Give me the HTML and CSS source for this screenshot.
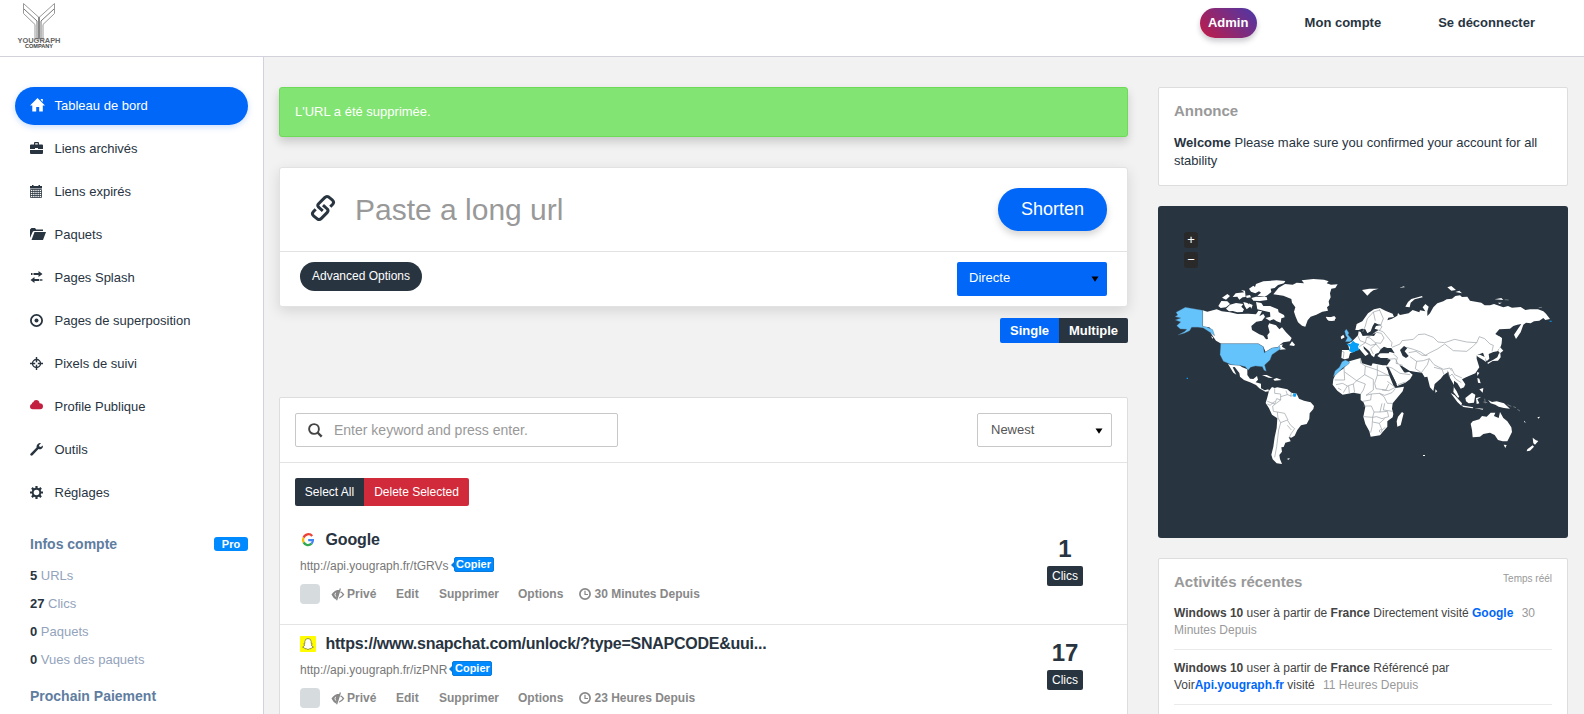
FILE: index.html
```html
<!DOCTYPE html>
<html lang="fr">
<head>
<meta charset="utf-8">
<title>Tableau de bord</title>
<link rel="stylesheet" href="styles.css">
</head>
<body>
<svg class="defs" width="0" height="0">
  <symbol id="eye" viewBox="0 0 14 13"><path d="M0.5 6.5 Q3.500 2 8.500 1.800 L5 11.500 Q2 10 .5 6.500z M8.800 .3 L10 .8 L6.200 12.600 L5 12.100z" fill="#888"/><path d="M4.600 4.800 Q3.200 6.800 4.800 8.600" fill="none" stroke="#fff" stroke-width=".9"/><path d="M9.800 3.200 Q12 4.400 13.400 6.500 Q11.500 9.600 7.800 10.700 L8.400 9.200 Q10.600 8.300 11.600 6.600 Q10.800 5.300 9.200 4.600z" fill="#888"/></symbol>
  <symbol id="clock" viewBox="0 0 12 12"><circle cx="6" cy="6" r="5.100" fill="none" stroke="#888" stroke-width="1.700"/><path d="M6 2.800v3.700h3" fill="none" stroke="#888" stroke-width="1.200"/></symbol>
</svg>
<header class="topbar">
  <svg class="logo" width="44" height="46" viewBox="0 0 44 46">
    <g fill="none" stroke="#999" stroke-width="1">
      <path d="M6.500 .5 L22 14.500 L37.500 .5 V10.500 L26 21.500 V36 H18 V21.500 L6.500 10.500z"/>
      <path d="M7 6 L20 18 V36 M37 6 L24 18 V36" stroke="#777"/>
      <path d="M22 14v22" stroke="#888" stroke-width="2"/>
    </g>
    <text x="22" y="40.300" text-anchor="middle" textLength="43" lengthAdjust="spacingAndGlyphs" class="logo-a">YOUGRAPH</text>
    <text x="22" y="44.800" text-anchor="middle" textLength="28" lengthAdjust="spacingAndGlyphs" class="logo-b">COMPANY</text>
  </svg>
  <nav class="topnav">
    <a class="admin">Admin</a>
    <a class="account">Mon compte</a>
    <a>Se déconnecter</a>
  </nav>
</header>
<div class="shell">
  <aside class="sidebar">
    <ul class="menu">
      <li class="active"><svg width="15" height="14" viewBox="0 0 15 14"><path d="M7.500 0 L15 7.500 H12.800 V13.500 H9.200 V9 H6.200 V13.500 H2.300 V7.500 H0z M10.800 1h2v3l-2-2z" fill="#fff"/></svg><span>Tableau de bord</span></li>
      <li><svg width="13" height="12" viewBox="0 0 13 12"><path d="M4 2.500V1.200Q4 0 5 0h3q1 0 1 1.200V2.500h3q1 0 1 1V7H8V6H5v1H0V3.500q0-1 1-1z M5.200 2.500h2.600V1.200H5.200z M0 8h13v3q0 1-1 1H1q-1 0-1-1z" fill="#28343f" fill-rule="evenodd"/></svg><span>Liens archivés</span></li>
      <li><svg width="13" height="13" viewBox="0 0 13 13"><path d="M0 1h2V0h1.500v1h5V0H10v1h2v2.500H0z" fill="#28343f"/><path d="M.5 4.500h11v8H.5z M.5 6.500h11 M.5 8.500h11 M.5 10.500h11 M2.700 4.500v8 M4.900 4.500v8 M7.100 4.500v8 M9.300 4.500v8" fill="none" stroke="#28343f" stroke-width=".8"/></svg><span>Liens expirés</span></li>
      <li><svg width="16" height="12" viewBox="0 0 16 12"><path d="M0 10V1.500L1.500 0H5l1.200 1.500H13V3H4.200Q3 3 2.600 4z M4.500 4H16L13 12H1.500z" fill="#28343f"/></svg><span>Paquets</span></li>
      <li><svg width="13" height="12" viewBox="0 0 13 12"><path d="M4 2h4.500V0L12.500 3 8.500 6V4H4z M1 2h1v2H1z M2.500 2h1v2h-1z M9 8H4.500V6L.5 9l4 3v-2H9z M9.700 8h1v2h-1z M11.300 8h1v2h-1z" fill="#28343f"/></svg><span>Pages Splash</span></li>
      <li><svg width="13" height="13" viewBox="0 0 13 13"><circle cx="6.500" cy="6.500" r="5.600" fill="none" stroke="#28343f" stroke-width="1.800"/><circle cx="6.500" cy="6.500" r="2" fill="#28343f"/></svg><span>Pages de superposition</span></li>
      <li><svg width="13" height="13" viewBox="0 0 13 13"><circle cx="6.500" cy="6.500" r="4" fill="none" stroke="#28343f" stroke-width="1.400"/><path d="M5.800 0h1.400v5.200H5.800z M5.800 7.800h1.400V13H5.800z M0 5.800h5.200v1.400H0z M7.800 5.800H13v1.400H7.800z" fill="#28343f"/></svg><span>Pixels de suivi</span></li>
      <li><svg class="up" width="13" height="10" viewBox="0 0 13 10"><path d="M2.800 9.300Q0 9.300 0 6.500 0 4.500 1.800 4.100 1.600 2.400 3.200 2.200 4.200 0 6.200 .1 9 .2 9.600 3.200 13 3.200 13 6.300 13 9.300 10.200 9.300z" fill="#c3203f"/></svg><span>Profile Publique</span></li>
      <li><svg width="13" height="13" viewBox="0 0 13 13"><path d="M12.800 2.500 Q13.300 4.600 11.600 5.800 10 6.700 8.500 6 L2.600 12.300 Q1.600 13.200 .6 12.300 -.2 11.400 .7 10.400 L6.600 4.600 Q6.200 2.500 7.800 1 9.400 -.3 11 .3 L9 2.200 9.300 3.600 10.800 4.100z" fill="#28343f"/></svg><span>Outils</span></li>
      <li><svg width="13" height="13" viewBox="0 0 13 13"><circle cx="6.500" cy="6.500" r="3.800" fill="none" stroke="#28343f" stroke-width="2"/><path d="M6.500 0v2.500M6.500 10.500V13M0 6.500h2.500M10.500 6.500H13M1.900 1.900l1.700 1.700M9.400 9.400l1.700 1.700M1.900 11.100l1.700-1.700M9.400 3.600l1.700-1.700" stroke="#28343f" stroke-width="2.200"/></svg><span>Réglages</span></li>
    </ul>
    <div class="info-head"><h3>Infos compte</h3><span class="pro">Pro</span></div>
    <ul class="stats">
      <li><b>5</b> URLs</li>
      <li><b>27</b> Clics</li>
      <li><b>0</b> Paquets</li>
      <li><b>0</b> Vues des paquets</li>
    </ul>
    <h3 class="next">Prochain Paiement</h3>
  </aside>
  <main class="content">
    <section class="center">
      <div class="alert">L'URL a été supprimée.</div>
      <div class="shortener">
        <div class="url-row">
          <svg class="chain" width="26" height="28" viewBox="0 0 26 28"><g fill="none" stroke="#28343f" stroke-width="3" stroke-linejoin="round"><path d="M12.800 16.800 L8.600 13.200 Q7 11.500 8.600 9.800 L14.700 3.600 Q16.500 1.800 18.500 2.900 L22.500 6.200 Q24.500 8.200 22.700 10.200 L20.300 12.700"/><path d="M13 11.200 L17.300 15 Q18.700 16.600 17.300 18.400 L11.400 24.400 Q9.600 26.200 7.600 25.100 L3.500 21.800 Q1.500 19.800 3.300 17.800 L5.700 15.300"/></g></svg>
          <span class="paste">Paste a long url</span>
          <span class="shorten">Shorten</span>
        </div>
        <div class="opt-row">
          <span class="advanced">Advanced Options</span>
          <span class="direct">Directe<svg width="8" height="6" viewBox="0 0 8 6"><path d="M.5 .5h7L4 5.800z"/></svg></span>
        </div>
      </div>
      <div class="mode"><span class="single">Single</span><span class="multiple">Multiple</span></div>
      <div class="links">
        <div class="filter">
          <div class="search"><svg width="15" height="15" viewBox="0 0 15 15"><circle cx="6" cy="6" r="4.900" fill="none" stroke="#444" stroke-width="1.900"/><path d="M9.500 9.500l4.200 4.200" stroke="#444" stroke-width="2.400"/></svg><span>Enter keyword and press enter.</span></div>
          <div class="sort">Newest<svg width="8" height="6" viewBox="0 0 8 6"><path d="M.5 .5h7L4 5.800z"/></svg></div>
        </div>
        <div class="bulk"><span class="all">Select All</span><span class="delete">Delete Selected</span></div>
        <article class="item">
          <div class="details">
            <h4><svg width="16" height="16" viewBox="0 0 16 16"><g fill="none" stroke-width="2.300"><path d="M12.200 4A5 5 0 0 0 3.600 5.700" stroke="#ea4335"/><path d="M3.600 5.700A5 5 0 0 0 3.600 10.400" stroke="#fbbc05"/><path d="M3.600 10.400A5 5 0 0 0 11.500 11.700" stroke="#34a853"/><path d="M11.500 11.700A5 5 0 0 0 12.900 8.100H8.200" stroke="#4285f4"/></g></svg><span class="name">Google</span></h4>
            <p class="short">http://api.yougraph.fr/tGRVs<span class="copy">Copier</span></p>
            <div class="actions"><i></i><svg class="eye" width="14" height="13"><use href="#eye"/></svg><b class="a1">Privé</b><b class="a2">Edit</b><b class="a3">Supprimer</b><b class="a4">Options</b><svg class="clock" width="12" height="12"><use href="#clock"/></svg><b>30 Minutes Depuis</b></div>
          </div>
          <div class="clicks"><strong>1</strong><span>Clics</span></div>
        </article>
        <article class="item second">
          <div class="details">
            <h4><svg width="16" height="16" viewBox="0 0 16 16"><rect width="16" height="16" rx="1" fill="#fffc00"/><path d="M8 2.500Q11 2.500 11.200 5.500V7.500L12.300 7.800 11.300 9Q12 10.600 13.500 11.100L11.500 12 11 12.700Q9.500 12.400 8 13.600 6.500 12.400 5 12.700L4.500 12 2.500 11.100Q4 10.600 4.700 9L3.700 7.800 4.800 7.500V5.500Q5 2.500 8 2.500z" fill="#fff" stroke="#7c7c30" stroke-width=".8"/></svg><span class="name tight">https://www.snapchat.com/unlock/?type=SNAPCODE&amp;uui...</span></h4>
            <p class="short">http://api.yougraph.fr/izPNR<span class="copy">Copier</span></p>
            <div class="actions"><i></i><svg class="eye" width="14" height="13"><use href="#eye"/></svg><b class="a1">Privé</b><b class="a2">Edit</b><b class="a3">Supprimer</b><b class="a4">Options</b><svg class="clock" width="12" height="12"><use href="#clock"/></svg><b>23 Heures Depuis</b></div>
          </div>
          <div class="clicks"><strong>17</strong><span>Clics</span></div>
        </article>
      </div>
    </section>
    <section class="right">
      <div class="panel notice"><h3>Annonce</h3><p><b>Welcome</b> Please make sure you confirmed your account for all stability</p></div>
      <div class="map">
        <div class="zoom"><span>+</span><span>−</span></div>
        <svg width="410" height="332" viewBox="24 18 1230 996">
          <g fill="#fff">
            <!-- Greenland, Iceland -->
            <path d="M370 283 L386 263 L405 252 L428 254 L440 248 L462 250 L455 241 L490 237 L522 239 L536 244 L530 250 L543 254 L563 253 L556 264 L544 266 L540 280 L542 292 L536 304 L538 316 L531 322 L534 332 L517 335 L499 344 L482 350 L473 361 L466 380 L456 377 L444 367 L437 350 L432 335 L436 322 L426 308 L424 297 L400 287z"/>
            <path d="M528 350 L541 352 L553 348 L558 355 L546 363 L533 360z"/>
            <!-- Arctic islands -->
            <path d="M297 266 L310 257 L315 261 L318 252 L340 244 L380 241 L406 243 L402 250 L384 255 L374 264 L362 266 L364 276 L352 286 L344 290 L322 287 L333 278 L327 274 L316 280 L303 275z"/>
            <path d="M216 293 L232 282 L240 288 L228 299z M248 291 L257 280 L283 277 L273 270 L285 272 L287 291 L278 292 L268 299 L262 290z M288 287 L300 285 L303 292 L290 294z M304 294 L318 290 L350 291 L352 300 L330 303 L310 302z M205 318 L214 303 L232 304 L240 312 L228 322 L212 324z M228 326 L240 314 L258 309 L280 312 L274 320 L282 328 L278 336 L262 337 L248 333 L237 334z M280 306 L292 309 L303 318 L290 328 L284 318z M296 310 L308 315 L304 326z M318 306 L334 309 L340 318 L360 318 L384 328 L386 337 L402 345 L404 352 L394 355 L392 368 L380 364 L371 358 L359 362 L346 354 L361 350 L360 337 L340 332 L322 328z"/>
            <!-- Canada -->
            <path d="M158 331 L172 335 L200 328 L215 334 L240 337 L262 342 L294 341 L318 343 L325 332 L336 334 L328 349 L340 342 L345 350 L336 362 L319 365 L304 378 L306 390 L328 403 L340 407 L348 418 L354 417 L352 406 L359 397 L354 378 L358 370 L378 376 L388 388 L396 382 L408 397 L425 414 L420 424 L400 427 L388 436 L398 433 L396 440 L408 448 L390 449 L383 442 L366 444 L347 456 L340 440 L325 431 L214 431 L198 422 L182 399 L190 397 L178 382 L158 380z"/>
            <path d="M418 436 L426 424 L435 434 L432 438z M183 407 L190 413 L187 416z"/>
            <!-- Mexico, Central America, Caribbean -->
            <path d="M234 492 L244 495 L268 496 L277 502 L292 508 L292 525 L300 536 L310 537 L321 528 L324 539 L317 547 L333 551 L333 565 L344 571 L355 568 L357 574 L346 575 L328 565 L318 555 L300 547 L282 540 L270 530 L268 519 L254 501 L248 502 L259 524 L250 518z M336 525 L350 525 L369 534 L356 533z M370 538 L380 534 L395 540 L374 542z"/>
            <!-- South America -->
            <path d="M357 572 L366 561 L374 564 L382 562 L412 568 L424 578 L440 581 L447 596 L462 602 L482 607 L492 618 L490 627 L479 640 L478 657 L470 672 L453 676 L442 690 L434 707 L424 713 L416 711 L422 724 L406 728 L401 741 L394 742 L396 755 L388 765 L390 777 L396 792 L380 790 L368 778 L364 764 L370 740 L374 712 L380 684 L382 655 L366 644 L357 625 L347 609 L352 592z M410 777 L419 774 L417 779z"/>
          </g>
          <g transform="translate(480 150)" fill="#fff">
            <!-- Eurasia -->
            <path d="M136 240 L140 222 L157 214 L174 190 L192 178 L210 174 L226 182 L248 191 L252 201 L235 203 L232 211 L246 206 L262 197 L264 189 L270 195 L296 190 L308 180 L328 187 L330 181 L346 184 L338 172 L346 162 L356 170 L352 184 L352 198 L360 190 L370 172 L382 160 L400 154 L410 148 L426 146 L436 138 L450 136 L456 141 L472 140 L480 152 L514 158 L524 166 L540 166 L552 162 L580 172 L594 168 L606 173 L632 171 L646 180 L660 178 L684 178 L700 184 L708 191 L720 207 L706 210 L700 204 L688 212 L672 214 L662 220 L648 218 L640 224 L632 247 L618 267 L612 254 L624 236 L634 222 L622 224 L610 228 L600 236 L568 238 L556 252 L576 264 L573 288 L562 304 L550 306 L536 312 L538 326 L530 334 L524 322 L519 308 L500 316 L500 326 L508 352 L496 370 L468 382 L456 388 L466 403 L462 412 L452 416 L442 400 L432 392 L432 412 L440 424 L448 441 L444 443 L430 426 L432 405 L420 384 L415 365 L400 376 L392 386 L374 402 L370 423 L360 412 L352 380 L344 382 L336 368 L314 365 L298 362 L276 348 L268 345 L282 366 L298 366 L308 374 L300 388 L286 398 L262 408 L254 391 L236 358 L230 347 L242 330 L232 324 L212 324 L202 318 L210 310 L240 306 L254 310 L244 294 L232 294 L222 290 L212 298 L206 308 L196 312 L192 322 L184 316 L178 304 L160 288 L162 296 L176 312 L166 318 L154 304 L148 296 L134 304 L120 310 L116 325 L104 328 L94 324 L96 300 L118 300 L116 290 L112 282 L124 276 L134 266 L144 256 L146 244 L152 246 L158 258 L184 256 L196 246 L206 240 L194 236 L198 228 L216 225 L204 223 L194 218 L188 228 L182 244 L172 250 L166 238 L156 236 L146 240z"/>
            <path d="M156 120 L178 116 L206 116 L190 121 L182 127 L172 137z M268 113 L282 109 L284 112z M286 170 L294 156 L304 147 L336 138 L338 142 L314 148 L302 158 L299 172z M412 112 L424 108 L438 120 L424 122z M436 126 L448 122 L456 130z M554 148 L574 144 L580 150z M584 150 L596 150z M564 158 L576 158 L568 162z M686 173 L696 172z M92 260 L100 254 L104 262 L94 268z M47 202 L76 202 L74 212 L56 212z"/>
            <!-- Japan, Southeast Asia -->
            <path d="M568 258 L575 266 L574 284 L569 280z M564 302 L570 291 L580 302 L570 310z M567 310 L571 310 L572 322 L564 332 L548 333 L534 342 L532 338 L550 329 L562 322z M498 316 L510 314 L526 322 L528 336 L520 330 L506 322z M501 366 L508 368 L502 378z M502 384 L508 386 L512 400 L504 398z M508 418 L520 414 L518 428z M376 418 L382 424 L376 428z M422 429 L434 436 L456 460 L454 467 L442 456z M454 466 L490 472 L488 475 L460 471z M494 474 L520 476 L518 479z M466 444 L486 428 L496 434 L492 458 L476 460 L468 454z M498 444 L514 440 L502 448 L508 460 L500 462z M534 450 L546 456 L560 454 L582 460 L600 476 L582 474 L566 470 L556 464 L542 460z M642 512 L648 518 L642 516z M682 502 L690 500 L686 506z"/>
            <!-- Australia, New Zealand -->
            <path d="M482 521 L488 514 L508 508 L516 498 L530 500 L542 488 L556 488 L552 498 L566 504 L570 486 L580 504 L592 514 L604 532 L606 546 L596 566 L592 574 L578 574 L564 570 L554 555 L540 548 L520 552 L510 560 L488 562 L486 540z M581 584 L590 585 L586 594z M668 563 L678 571 L685 573 L675 584 L670 580z M668 586 L672 590 L660 602 L650 604 L652 598z"/>
            <!-- Africa -->
            <path d="M118 334 L152 324 L156 340 L184 348 L188 340 L218 346 L230 346 L236 372 L250 406 L256 414 L282 410 L278 424 L248 460 L246 476 L250 492 L248 502 L232 514 L232 530 L220 544 L210 556 L182 560 L178 544 L166 522 L160 500 L166 470 L160 456 L152 450 L152 432 L130 428 L98 434 L82 422 L68 404 L70 388 L78 370 L100 356z M276 486 L281 490 L272 526 L262 530 L260 514 L264 500z M339 615 h6 v3 h-6z"/>
            <g fill="#28343f"><path d="M270 300 L282 288 L292 294 L284 304 L296 318 L288 324 L278 318z M172 250 L184 254 L198 248 L192 258 L172 256z M228 350 L236 352 L260 402 L254 404z M276 350 L298 365 L284 368z"/><path d="M210 310 L226 296 L240 302 L236 310z"/></g>
          </g>
          <g fill="none" stroke="#8b949b" stroke-width="1.800" stroke-linejoin="round">
            <!-- South American borders -->
            <path d="M374 565 L374 580 L392 582 L392 600 L380 596 L374 612 L352 604 M392 590 L412 584 L408 572 M412 584 L424 588 L440 584 M424 578 L422 590 M352 612 L360 616 L374 604 M392 600 L368 618 L370 634 L382 636 L384 654 L392 668 L412 660 L422 676 L434 686 L424 700 L418 712 M382 636 L404 640 L414 660 M392 668 L386 690 L380 740 L374 772 M412 676 L424 690"/>
            <g transform="translate(480 150)">
              <path d="M158 246 L166 228 L172 206 L190 186 L210 180 M190 186 L196 212 M208 178 L220 206 L212 226 M196 246 L214 250 L222 264 L212 280 L196 278 L180 264 L170 262 L166 278 L148 290 M144 258 L150 272 L166 278 L182 286 L198 282 L206 292 L212 298 M206 240 L220 246 L246 278 L244 290 M196 278 L198 282 L182 296 L190 312 M204 222 L216 230 L208 242 M96 304 L102 306 L100 324 M170 262 L182 258"/>
              <path d="M246 292 L270 282 L276 272 L310 268 L324 254 L344 252 L370 262 L384 276 L404 278 L434 268 L470 276 L500 278 L488 290 L470 304 L430 302 L404 282 L384 296 L360 308 L346 316 L332 306 L310 298 L290 292 M296 308 L318 304 L336 316 L352 316 M320 334 L316 356 L334 368 L352 344 L358 326 L340 332 L320 334 M300 320 L320 334 M358 326 L372 344 L400 358 L420 354 L424 362 M500 278 L508 260 L524 266 L540 282 L550 286 L546 304 M412 362 L418 380 L426 372 L438 388 L454 398 M424 354 L434 374 L456 384 M250 312 L262 322 L258 340 L278 346 M232 350 L246 354 L270 370 L300 374 M264 404 L286 396 M232 328 L256 326 L264 342 M372 352 L396 358 L402 374"/>
              <!-- African borders -->
              <path d="M102 354 L104 390 L74 390 M104 366 L140 392 L130 402 L112 408 L100 428 M154 340 L166 348 L164 374 L140 392 M152 324 L152 340 M166 348 L202 360 L238 378 M202 346 V376 H238 M164 374 L190 388 L190 420 L168 436 M202 376 L194 400 L198 416 L228 420 L236 402 M130 402 L134 428 M140 392 L166 402 L160 420 L152 432 M168 436 L184 432 L208 430 L222 440 L232 460 L248 460 M158 454 L182 450 L184 432 M160 468 L184 468 L192 486 L188 502 L162 500 M208 430 L224 436 L246 428 L256 416 M216 460 L210 486 L192 486 M210 486 L232 484 L236 500 L216 506 L200 500 L188 502 L186 530 L182 548 M188 516 L208 520 L224 506 M208 520 L216 540 L226 532 M224 460 L220 480 L248 484 M232 394 L256 412 L236 422 L216 420 M78 404 L98 400 L112 408 M84 414 L94 420 M116 408 L118 430"/>
              <circle cx="212" cy="543" r="4"/>
              <path d="M592 464l12 5M610 470l8 3M622 478l8 5M524 446l2 14M520 456l12 2M584 149l12 1M686 173l10-1" stroke-width="2"/>
            </g>
          </g>
          <g fill="#65c3fc" stroke="#45617a" stroke-width="1">
            <path d="M158 331 V379 L170 381 L188 389 L194 407 L183 399 L160 384 L144 382 L125 382 L119 392 L103 400 L84 405 L105 394 L110 388 L91 387 L80 377 L92 366 L76 360 L92 354 L75 350 L83 345 L78 337 L106 322z"/>
            <path d="M212 431 H325 L340 440 L343 458 L366 444 L384 442 L388 436 L391 447 L366 464 L360 480 L344 495 L349 514 L342 511 L337 500 L316 498 L302 502 L294 511 L286 500 L268 496 L244 494 L220 484 L210 464z"/>
            <path d="M584 394 L589 387 L597 399 L594 404 L607 420 L600 425 L586 425 L592 413 L587 406z"/>
            <path d="M576 485 L586 480 L599 486 L596 492 L577 505 L562 520 L550 530 L555 513 L568 502z"/>
          </g>
          <path d="M589 431 L602 431 L609 422 L616 428 L628 432 L624 440 L628 450 L618 453 L607 458 L597 453 L600 441z M429 580 L439 581 L437 590 L430 590z M110 533h4v4h-4z M1199 362h6v3h-6z" fill="#08a0f7"/>
        </svg>
      </div>
      <div class="panel activity">
        <div class="act-head"><h3>Activités récentes</h3><span>Temps réél</span></div>
        <p><b>Windows 10</b> user à partir de <b>France</b> Directement visité <a>Google</a> <em>30 Minutes Depuis</em></p>
        <p><b>Windows 10</b> user à partir de <b>France</b> Référencé par Voir<a>Api.yougraph.fr</a> visité <em>11 Heures Depuis</em></p>
      </div>
    </section>
  </main>
</div>
</body>
</html>
```
FILE: styles.css
```css
* { box-sizing: border-box; }
body { margin: 0; height: 714px; overflow: hidden; background: #f2f2f2; font: 13px/18px "Liberation Sans", Arial, sans-serif; color: #28343f; }
ul, p, h3, h4 { margin: 0; padding: 0; list-style: none; }
h3 { font-size: 14px; line-height: 18px; color: #5f7d9f; }
svg { display: block; flex: none; }
.defs { position: absolute; }

.topbar { height: 57px; background: #fff; border-bottom: 1px solid #d2d1dc; display: flex; justify-content: space-between; align-items: flex-start; padding: 3px 50px 0 17px; }
.logo-a { font: bold 6.5px "Liberation Sans", Arial, sans-serif; fill: #666; }
.logo-b { font: bold 5px "Liberation Sans", Arial, sans-serif; fill: #444; }
.topnav { display: flex; font-weight: bold; padding-top: 5px; }
.topnav a { white-space: nowrap; line-height: 29px; }
.admin { width: 57px; height: 30px; border-radius: 15px; color: #fff; text-align: center; background: linear-gradient(45deg, #c31c46, #4938aa); box-shadow: 0 4px 6px rgba(50,50,93,.11), 0 3px 5px rgba(0,0,0,.12); margin-right: 48px; }
.account { margin-right: 57px; }
.topnav a:last-child { margin-right: -1px; }

.shell { display: flex; height: 657px; overflow: hidden; }
.sidebar { width: 264px; background: #fff; border-right: 1px solid #d2d1dc; padding: 30px 15px 0; flex: none; }
.menu li { height: 38px; margin-bottom: 5px; padding: 0 15px; display: grid; grid-template-columns: 24.5px auto; justify-content: start; align-items: center; border-radius: 19px; }
.menu li svg { margin-bottom: 2px; }
.menu li .up { margin-bottom: 5px; }
.menu .active { background: #0067f9; color: #fff; box-shadow: 0 2px 6px rgba(0,103,249,.22); }
.info-head { display: flex; justify-content: space-between; padding: 18px 0 0 15px; height: 45px; }
.pro { width: 34px; height: 14px; margin-top: 2px; border-radius: 3px; background: #008aff; color: #fff; font: bold 11px/14px "Liberation Sans", Arial, sans-serif; text-align: center; }
.stats { padding-left: 15px; color: #93a3bb; line-height: 28px; }
.stats b { color: #28343f; }
.next { padding: 13px 0 0 15px; }

.content { display: grid; grid-template-columns: 849px 410px; gap: 30px; padding: 30px 16px 0 15px; }
.alert { height: 50px; border: 1px solid #6edb58; border-radius: 3px; background: #82e472; color: #fff; padding: 15px; box-shadow: 0 5px 10px rgba(0,0,0,.17); }
.shortener { margin-top: 30px; height: 140px; background: #fff; border: 1px solid #e2e2e2; border-radius: 3px; box-shadow: 0 4px 14px rgba(0,0,0,.12); }
.url-row { height: 84px; border-bottom: 1px solid #e2e2e2; display: flex; align-items: flex-start; padding: 20px 20px 0 30px; }
.chain { margin: 6px 19px 0 0; }
.paste { font-size: 30px; line-height: 43px; color: #999; flex: 1; }
.shorten { width: 109px; height: 43px; border-radius: 21px; background: #0067f9; color: #fff; font-size: 18px; line-height: 43px; text-align: center; box-shadow: 0 4px 7px rgba(0,0,0,.17); }
.opt-row { display: flex; justify-content: space-between; padding: 10px 20px; align-items: flex-start; }
.advanced { width: 122px; height: 29px; border-radius: 15px; background: #28343f; color: #fff; font-size: 12px; line-height: 28px; text-align: center; }
.direct { width: 150px; height: 34px; border-radius: 2px; background: #0067f9; color: #fff; line-height: 31px; padding: 0 8px 0 12px; display: flex; justify-content: space-between; }
.direct svg { margin-top: 14px; }
.mode { display: flex; justify-content: flex-end; margin-top: 11px; color: #fff; font-weight: bold; line-height: 25px; text-align: center; }
.single { width: 59px; background: #0067f9; border-radius: 2px 0 0 2px; }
.multiple { width: 69px; background: #28343f; border-radius: 0 2px 2px 0; }

.links { margin-top: 54px; background: #fff; border: 1px solid #ddd; border-radius: 2px; height: 330px; }
.filter { height: 65px; border-bottom: 1px solid #e4e4e4; padding: 15px; display: flex; justify-content: space-between; }
.search, .sort { height: 34px; border: 1px solid #c8c8c8; border-radius: 2px; display: flex; align-items: center; }
.search { width: 323px; padding-left: 12px; font-size: 14px; color: #999; }
.search svg { margin-right: 11px; }
.sort { width: 135px; padding: 0 8px 0 13px; justify-content: space-between; color: #555; }
.sort svg { margin-top: 1px; }
.bulk { display: flex; margin: 15px 0 0 15px; color: #fff; font-size: 12px; line-height: 28px; height: 28px; text-align: center; }
.all { width: 69px; background: #28343f; border-radius: 2px 0 0 2px; }
.delete { width: 105px; background: #d12a3a; border-radius: 0 2px 2px 0; }
.item { display: flex; justify-content: space-between; height: 119px; padding: 25px 44px 0 20px; border-bottom: 1px solid #e4e4e4; }
.second { height: 104px; padding-top: 10px; border: 0; }
.item h4 { display: flex; align-items: center; height: 18px; font-size: 16px; line-height: 18px; gap: 9.5px; white-space: nowrap; }
.name { letter-spacing: -.15px; }
.tight { letter-spacing: -.25px; }
.short { height: 16px; margin-top: 9px; font-size: 12px; line-height: 16px; color: #777; display: flex; }
.copy { position: relative; margin: -1px 0 0 5px; height: 15px; width: 40px; border: 1px solid #087bdc; border-radius: 2px; background: #008aff; color: #fff; font: bold 11px/13px "Liberation Sans", Arial, sans-serif; text-align: center; }
.copy::before { content: ""; position: absolute; left: -4px; top: 4px; border: 3px solid transparent; border-right-color: #087bdc; border-left: 0; }
.actions { margin-top: 10px; height: 20px; display: flex; align-items: center; font-size: 12px; color: #888; white-space: nowrap; }
.actions i { width: 20px; height: 20px; border-radius: 4px; background: #d6dbde; margin-right: 11px; }
.eye { margin-right: 2px; }
.a1 { width: 49px; }
.a2 { width: 43px; }
.a3 { width: 79px; }
.a4 { width: 61px; }
.clock { margin-right: 3.5px; }
.clicks { width: 36px; text-align: center; }
.clicks strong { display: block; font-size: 24px; line-height: 26px; margin: 5px -10px 4px; }
.clicks span { display: block; height: 20px; background: #28343f; color: #fff; border-radius: 2px; font-size: 12px; line-height: 20px; }

.panel { background: #fff; border: 1px solid #ddd; border-radius: 2px; padding: 14px 15px; }
.panel h3 { color: #999; font-size: 15px; }
.notice { height: 99px; }
.notice p { margin-top: 14px; }
.map { margin-top: 20px; height: 332px; border-radius: 3px; background: #28343f; position: relative; }
.zoom { position: absolute; left: 26px; top: 26px; display: grid; gap: 4px; }
.zoom span { width: 14px; height: 16px; border-radius: 3px; background: #292929; color: #fff; text-align: center; line-height: 15px; }
.activity { margin-top: 20px; height: 200px; color: #444; font-size: 12px; line-height: 17px; }
.act-head { display: flex; justify-content: space-between; margin-bottom: 14px; }
.act-head span { font-size: 10px; color: #999; line-height: 12px; }
.activity p { height: 45px; border-bottom: 1px solid #eaeaea; }
.activity p:last-child { margin-top: 10px; }
.activity a { color: #0067f9; font-weight: bold; }
.activity em { font-style: normal; color: #999; margin-left: 5px; }
```
